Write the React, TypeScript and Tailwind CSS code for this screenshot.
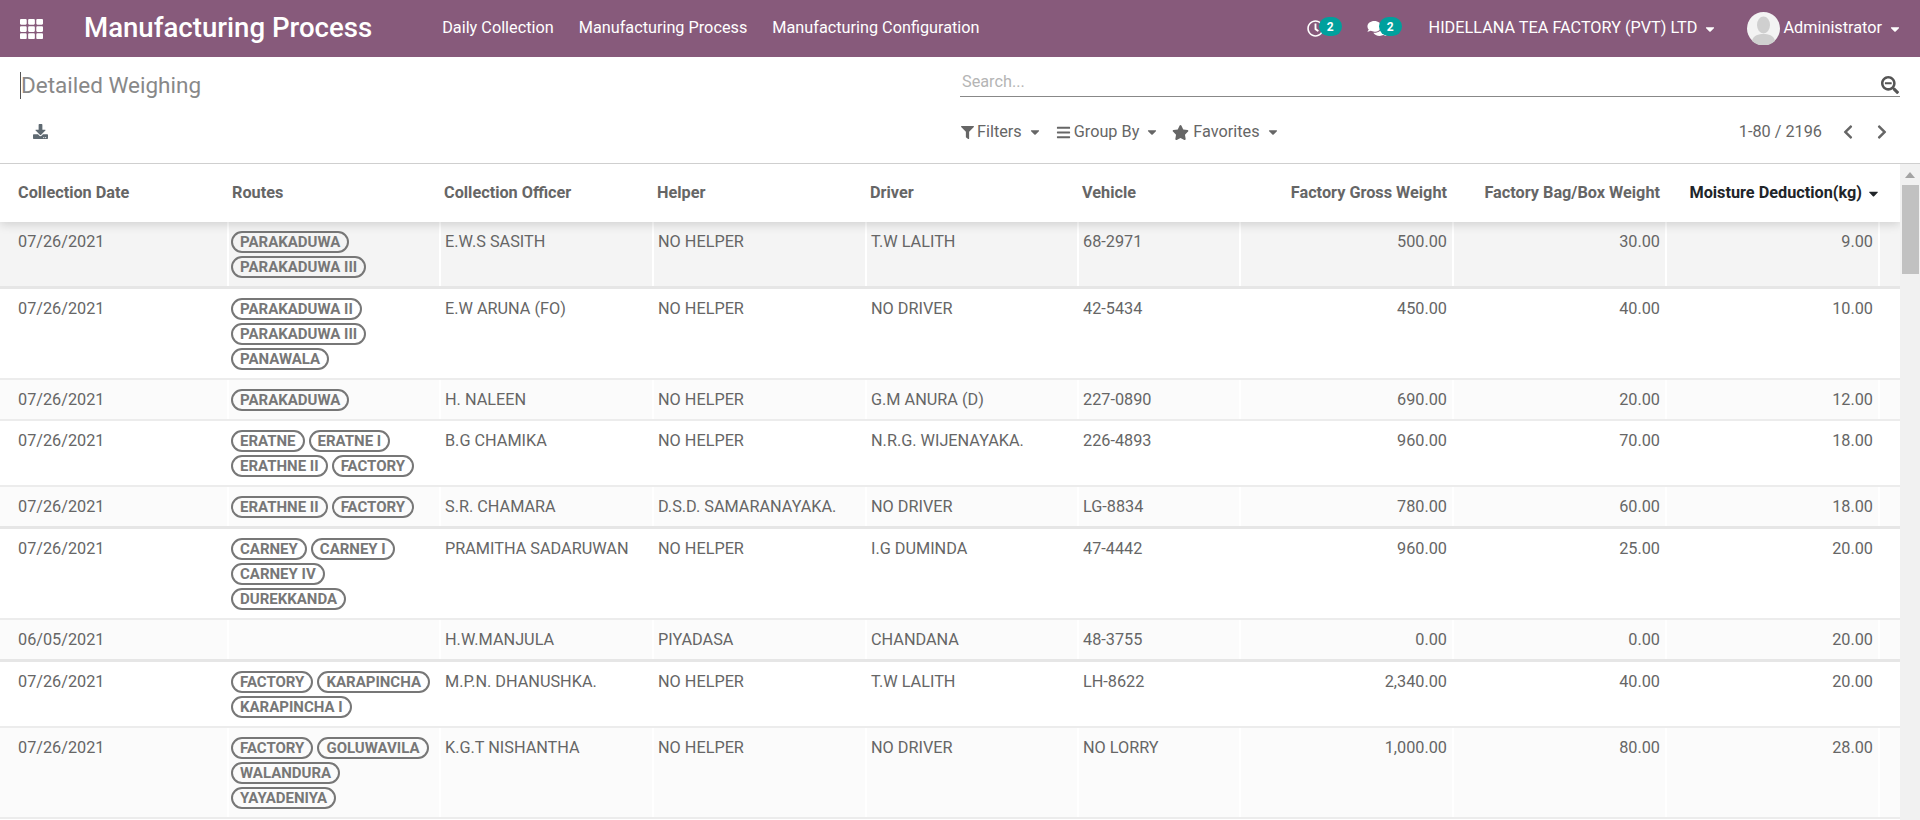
import React from "react";
import {
  FaTh,
  FaDownload,
  FaSearchMinus,
  FaFilter,
  FaBars,
  FaStar,
  FaChevronLeft,
  FaChevronRight,
  FaRegClock,
  FaComments,
  FaCaretDown,
} from "react-icons/fa";

interface Row {
  date: string;
  routes: string[];
  officer: string;
  helper: string;
  driver: string;
  vehicle: string;
  gross: string;
  bag: string;
  moisture: string;
  thick?: boolean;
}

const rows: Row[] = [
  { date: "07/26/2021", routes: ["PARAKADUWA", "PARAKADUWA III"], officer: "E.W.S SASITH", helper: "NO HELPER", driver: "T.W LALITH", vehicle: "68-2971", gross: "500.00", bag: "30.00", moisture: "9.00", thick: true },
  { date: "07/26/2021", routes: ["PARAKADUWA II", "PARAKADUWA III", "PANAWALA"], officer: "E.W ARUNA (FO)", helper: "NO HELPER", driver: "NO DRIVER", vehicle: "42-5434", gross: "450.00", bag: "40.00", moisture: "10.00" },
  { date: "07/26/2021", routes: ["PARAKADUWA"], officer: "H. NALEEN", helper: "NO HELPER", driver: "G.M ANURA (D)", vehicle: "227-0890", gross: "690.00", bag: "20.00", moisture: "12.00" },
  { date: "07/26/2021", routes: ["ERATNE", "ERATNE I", "ERATHNE II", "FACTORY"], officer: "B.G CHAMIKA", helper: "NO HELPER", driver: "N.R.G. WIJENAYAKA.", vehicle: "226-4893", gross: "960.00", bag: "70.00", moisture: "18.00" },
  { date: "07/26/2021", routes: ["ERATHNE II", "FACTORY"], officer: "S.R. CHAMARA", helper: "D.S.D. SAMARANAYAKA.", driver: "NO DRIVER", vehicle: "LG-8834", gross: "780.00", bag: "60.00", moisture: "18.00", thick: true },
  { date: "07/26/2021", routes: ["CARNEY", "CARNEY I", "CARNEY IV", "DUREKKANDA"], officer: "PRAMITHA SADARUWAN", helper: "NO HELPER", driver: "I.G DUMINDA", vehicle: "47-4442", gross: "960.00", bag: "25.00", moisture: "20.00" },
  { date: "06/05/2021", routes: [], officer: "H.W.MANJULA", helper: "PIYADASA", driver: "CHANDANA", vehicle: "48-3755", gross: "0.00", bag: "0.00", moisture: "20.00", thick: true },
  { date: "07/26/2021", routes: ["FACTORY", "KARAPINCHA", "KARAPINCHA I"], officer: "M.P.N. DHANUSHKA.", helper: "NO HELPER", driver: "T.W LALITH", vehicle: "LH-8622", gross: "2,340.00", bag: "40.00", moisture: "20.00" },
  { date: "07/26/2021", routes: ["FACTORY", "GOLUWAVILA", "WALANDURA", "YAYADENIYA"], officer: "K.G.T NISHANTHA", helper: "NO HELPER", driver: "NO DRIVER", vehicle: "NO LORRY", gross: "1,000.00", bag: "80.00", moisture: "28.00" },
];

const cols = "grid grid-cols-[227px_212px_213px_213px_212px_162px_213px_213px_213px_22px]";

const Badge = ({ n }: { n: number }) => (
  <span className="absolute left-[12px] top-[-3px] flex h-[19px] w-[23px] items-center justify-center rounded-full bg-[#00a09d] text-[12px] font-bold text-white">
    {n}
  </span>
);

const Caret = ({ className }: { className: string }) => <FaCaretDown className={className} />;

const Nav = () => (
  <header className="flex h-[57px] items-center bg-[#875a7b] text-white">
    <FaTh className="ml-[20px] h-[24px] w-[23px]" />
    <span className="mb-[2px] ml-[41px] text-[27.6px] font-medium">Manufacturing Process</span>
    <nav className="ml-[70px] flex gap-[25px] text-[16.25px]">
      <span>Daily Collection</span>
      <span>Manufacturing Process</span>
      <span>Manufacturing Configuration</span>
    </nav>
    <div className="ml-auto flex items-center">
      <span className="relative h-[17px] w-[17px]">
        <FaRegClock className="h-[17px] w-[17px]" />
        <Badge n={2} />
      </span>
      <span className="relative ml-[43px] h-[17px] w-[20px]">
        <FaComments className="h-[17px] w-[20px]" />
        <Badge n={2} />
      </span>
      <span className="ml-[42px] text-[16.25px]">HIDELLANA TEA FACTORY (PVT) LTD</span>
      <Caret className="ml-[8px] h-[14px] w-[10px]" />
      <svg className="ml-[32px] h-[33px] w-[33px]" viewBox="0 0 33 33">
        <circle cx="16.5" cy="16.5" r="16.5" fill="#f3f3f3" />
        <ellipse cx="16.5" cy="13" rx="6.5" ry="8.5" fill="#cfcfcf" />
        <path d="M5 29c1-6 7-7 11.5-7s10.500 1 11.500 7a16.500 16.500 0 0 1-23 0z" fill="#cfcfcf" />
      </svg>
      <span className="ml-[3px] text-[16.25px]">Administrator</span>
      <Caret className="ml-[8px] mr-[20px] h-[14px] w-[10px]" />
    </div>
  </header>
);

const ControlPanel = () => (
  <section className="flex h-[107px] border-b border-[#cfcfcf] bg-white text-[#666]">
    <div className="w-[960px] pl-[20px]">
      <div className="mt-[15px] h-[27px] border-l border-[#555] text-[22.5px] leading-[27px] text-[#888]">
        Detailed Weighing
      </div>
      <FaDownload className="ml-[13px] mt-[25px] h-[15px] w-[15px] text-[#5f6a72]" />
    </div>
    <div className="w-[940px]">
      <div className="relative mt-[13px] flex h-[27px] items-center border-b border-[#888] pb-[2px] pl-[2px] text-[16.25px] text-[#b5b5b5]">
        Search...
        <FaSearchMinus className="absolute right-[1px] top-[6px] h-[18px] w-[18px] text-[#555]" />
      </div>
      <div className="mt-[23px] flex h-[24px] items-center text-[16.25px]">
        <FaFilter className="ml-[1px] h-[13px] w-[13px]" />
        <span className="ml-[3px]">Filters</span>
        <Caret className="ml-[8px] h-[14px] w-[10px]" />
        <FaBars className="ml-[16px] h-[15px] w-[15px]" />
        <span className="ml-[3px]">Group By</span>
        <Caret className="ml-[8px] h-[14px] w-[10px]" />
        <FaStar className="ml-[15px] h-[15px] w-[17px]" />
        <span className="ml-[4px]">Favorites</span>
        <Caret className="ml-[8px] h-[14px] w-[10px]" />
        <span className="ml-auto">1-80 / 2196</span>
        <FaChevronLeft className="ml-[18px] h-[16px] w-[16px]" />
        <FaChevronRight className="ml-[18px] mr-[10px] h-[16px] w-[16px]" />
      </div>
    </div>
  </section>
);

const Tag = ({ label }: { label: string }) => (
  <span className="h-[22px] rounded-full border-2 border-[#777] px-[7px] text-[15px] leading-[18px] font-bold text-[#777]">
    {label}
  </span>
);

const Head = () => (
  <div className={`${cols} relative z-10 h-[58px] items-center bg-white pt-[1px] text-[16.25px] font-bold text-[#666] shadow-[0_2px_10px_rgba(0,0,0,0.16)]`}>
    <span className="pl-[18px]">Collection Date</span>
    <span className="pl-[5px]">Routes</span>
    <span className="pl-[5px]">Collection Officer</span>
    <span className="pl-[5px]">Helper</span>
    <span className="pl-[5px]">Driver</span>
    <span className="pl-[5px]">Vehicle</span>
    <span className="pr-[5px] text-right">Factory Gross Weight</span>
    <span className="pr-[5px] text-right">Factory Bag/Box Weight</span>
    <span className="flex items-center justify-end whitespace-nowrap text-[#212529]">
      Moisture Deduction(kg)
      <Caret className="ml-[5px] mr-[-2px] h-[15px] w-[13px]" />
    </span>
  </div>
);

const cell = "border-l-2 border-white pl-[4px] pt-[8px] pb-[7px]";
const numCell = "border-l-2 border-white pr-[5px] pt-[8px] pb-[7px] text-right";

const TableRow = ({ row, i }: { row: Row; i: number }) => {
  const bg = i === 0 ? "bg-[#f4f4f4]" : i % 2 === 0 ? "bg-[#fbfbfb]" : "bg-white";
  const border = row.thick ? "border-b-[3px] border-[#e6e6e6]" : "border-b-2 border-[#ececec]";
  return (
    <div className={`${cols} ${bg} ${border} text-[16.25px] leading-[24px] text-[#666]`}>
      <div className="pl-[18px] pt-[8px] pb-[7px]">{row.date}</div>
      <div className="flex flex-wrap content-start gap-x-[4px] gap-y-[3px] border-l-2 border-white pl-[2px] pr-[2px] pt-[9px] pb-[8px]">
        {row.routes.map((r) => (
          <Tag key={r} label={r} />
        ))}
      </div>
      <div className={cell}>{row.officer}</div>
      <div className={cell}>{row.helper}</div>
      <div className={cell}>{row.driver}</div>
      <div className={cell}>{row.vehicle}</div>
      <div className={numCell}>{row.gross}</div>
      <div className={numCell}>{row.bag}</div>
      <div className={numCell}>{row.moisture}</div>
      <div className="border-l-2 border-white" />
    </div>
  );
};

const Scrollbar = () => (
  <div className="flex w-[20px] flex-col items-center bg-[#f1f1f1]">
    <div className="mt-[8px] h-0 w-0 border-x-[5px] border-b-[6px] border-x-transparent border-b-[#a3a3a3]" />
    <div className="mt-[7px] h-[89px] w-[17px] bg-[#c1c1c1]" />
  </div>
);

export default function App() {
  return (
    <div className="flex h-[820px] flex-col overflow-hidden bg-white font-[Roboto,sans-serif]">
      <Nav />
      <ControlPanel />
      <div className="flex min-h-0 flex-1">
        <div className="w-[1900px] overflow-hidden">
          <Head />
          {rows.map((r, i) => (
            <TableRow key={i} row={r} i={i} />
          ))}
        </div>
        <Scrollbar />
      </div>
    </div>
  );
}
